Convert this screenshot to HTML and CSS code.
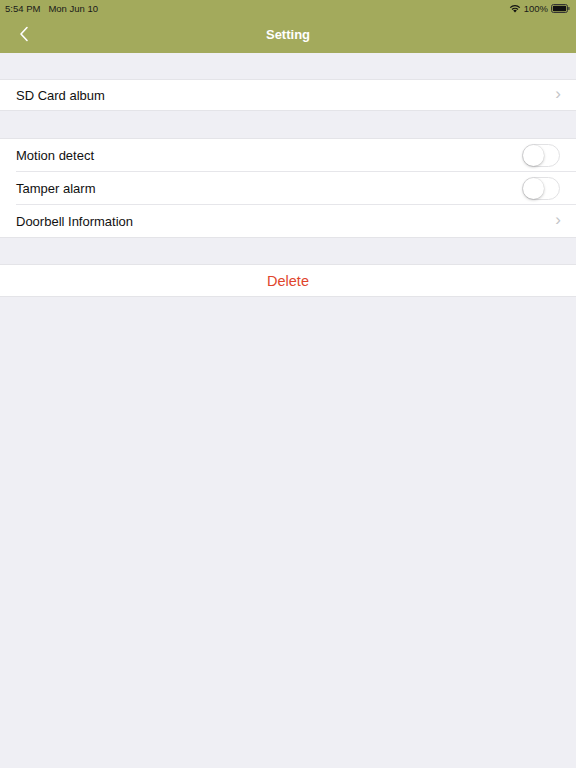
FILE: index.html
```html
<!DOCTYPE html>
<html>
<head>
<meta charset="utf-8">
<link rel="stylesheet" href="styles.css">
</head>
<body>
<div class="header">
  <div class="status">
    <div class="status-left"><span>5:54 PM</span><span class="date">Mon Jun 10</span></div>
    <div class="status-right">
      <svg class="wifi" width="12" height="9" viewBox="0 0 12 9"><path d="M6 8.6 L4.2 6.6 A2.6 2.6 0 0 1 7.8 6.6 Z" fill="#111"/><path d="M2.6 5 A4.9 4.9 0 0 1 9.4 5 L8.5 5.9 A3.6 3.6 0 0 0 3.5 5.9 Z" fill="#111"/><path d="M0.8 3.2 A7.4 7.4 0 0 1 11.2 3.2 L10.3 4.1 A6.1 6.1 0 0 0 1.7 4.1 Z" fill="#111"/></svg>
      <span>100%</span>
      <svg class="battery" width="19" height="9" viewBox="0 0 19 9"><rect x="0.5" y="0.5" width="16" height="8" rx="2" fill="none" stroke="#333" stroke-width="1"/><rect x="1.8" y="1.8" width="13.4" height="5.4" rx="1" fill="#111"/><rect x="17.3" y="3" width="1.2" height="3" rx="0.5" fill="#333"/></svg>
    </div>
  </div>
  <div class="nav">
    <svg class="back" width="10" height="16" viewBox="0 0 10 16"><path d="M8 1.5 L2 8 L8 14.5" fill="none" stroke="#fff" stroke-width="1.6" stroke-linecap="round" stroke-linejoin="round"/></svg>
    <div class="title">Setting</div>
  </div>
</div>

<div class="group g1">
  <div class="row"><span class="label">SD Card album</span><span class="chev">&#x203A;</span></div>
</div>

<div class="group g2">
  <div class="row sep"><span class="label">Motion detect</span><span class="toggle"><span class="knob"></span></span></div>
  <div class="row sep"><span class="label">Tamper alarm</span><span class="toggle"><span class="knob"></span></span></div>
  <div class="row last"><span class="label">Doorbell Information</span><span class="chev">&#x203A;</span></div>
</div>

<div class="group g3">
  <div class="row center"><span class="delete">Delete</span></div>
</div>
</body>
</html>
```
FILE: styles.css
```css
html, body {
  margin: 0;
  padding: 0;
  background: #efeff4;
  font-family: "Liberation Sans", Arial, sans-serif;
  height: 100%;
}
.header {
  background: #a3aa5c;
  height: 53px;
}
.status {
  height: 17px;
  display: flex;
  justify-content: space-between;
  align-items: center;
  padding: 0 6px 0 5px;
  font-size: 9.5px;
  color: #1a1a1a;
}
.status-left .date { margin-left: 8px; }
.status-right {
  display: flex;
  align-items: center;
  gap: 3px;
}
.nav {
  position: relative;
  height: 36px;
  display: flex;
  align-items: center;
  justify-content: center;
}
.back {
  position: absolute;
  left: 19px;
  top: 9px;
}
.title {
  color: #fff;
  font-size: 13px;
  font-weight: bold;
  margin-top: -2px;
}
.group {
  background: #fff;
  border-top: 1px solid #e4e4e8;
  border-bottom: 1px solid #e4e4e8;
}
.g1 { margin-top: 26px; }
.g2 { margin-top: 27px; }
.g3 { margin-top: 26px; }
.row {
  height: 31px;
  display: flex;
  align-items: center;
  justify-content: space-between;
  padding: 0 16px;
  position: relative;
}
.g1 .row { height: 30px; }
.g2 .row.sep { height: 33px; }
.g2 .row.last { height: 32px; }
.g3 .row { height: 31px; }
.row.sep::after {
  content: "";
  position: absolute;
  left: 16px;
  right: 0;
  bottom: 0;
  height: 1px;
  background: #e6e6ea;
}
.label {
  font-size: 13px;
  color: #111;
}
.chev {
  font-size: 17px;
  color: #c4c4c8;
  margin-right: -1px;
  margin-top: -2px;
}
.toggle {
  width: 36px;
  height: 21px;
  border: 1px solid #e2e2e4;
  border-radius: 12px;
  background: #fff;
  position: relative;
}
.knob {
  position: absolute;
  left: 0;
  top: 0;
  width: 21px;
  height: 21px;
  border-radius: 50%;
  background: #fff;
  box-shadow: 0 1px 3px rgba(0,0,0,0.25), 0 0 0 0.5px rgba(0,0,0,0.06);
}
.center { justify-content: center; }
.delete {
  color: #e0452c;
  font-size: 14.5px;
}
```
